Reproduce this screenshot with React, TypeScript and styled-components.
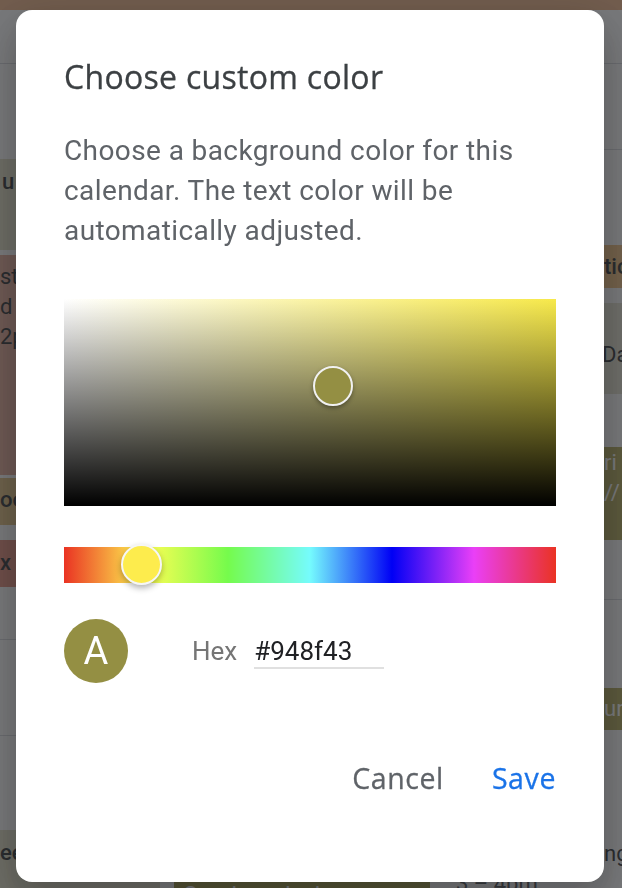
import React from "react";
import styled, { createGlobalStyle } from "styled-components";

const Global = createGlobalStyle`
  html, body { margin: 0; padding: 0; }
  body {
    width: 622px;
    height: 888px;
    overflow: hidden;
    background: #ffffff;
    font-family: Roboto, "Liberation Sans", Arial, sans-serif;
  }
`;

/* ---------- background calendar page ---------- */

const Page = styled.div`
  position: relative;
  width: 622px;
  height: 888px;
  overflow: hidden;
  background: #ffffff;
  display: flex;
  flex-direction: column;
`;

const TopBar = styled.div`
  flex: none;
  height: 10px;
  background: #efb98f;
`;

const Columns = styled.div`
  flex: 1;
  display: grid;
  grid-template-columns: 160px 280px 182px;
  min-height: 0;
`;

const Column = styled.div<{ $padLeft?: number; $padRight?: number }>`
  display: flex;
  flex-direction: column;
  overflow: hidden;
  padding-left: ${(p) => p.$padLeft ?? 0}px;
  padding-right: ${(p) => p.$padRight ?? 0}px;
`;

const Cell = styled.div<{ $h: number; $line?: boolean }>`
  flex: none;
  box-sizing: border-box;
  height: ${(p) => p.$h}px;
  border-bottom: ${(p) => (p.$line ? "1px solid #dadce0" : "none")};
`;

const Event = styled.div<{
  $h: number;
  $bg: string;
  $light?: boolean;
  $bold?: boolean;
  $top: number;
}>`
  flex: none;
  box-sizing: border-box;
  height: ${(p) => p.$h}px;
  background: ${(p) => p.$bg};
  color: ${(p) => (p.$light ? "#ffffff" : "#3c4043")};
  font-family: Roboto, "Liberation Sans", sans-serif;
  font-size: 22px;
  font-weight: ${(p) => (p.$bold ? 500 : 400)};
  line-height: 30px;
  white-space: nowrap;
  overflow: hidden;
  padding-top: ${(p) => p.$top}px;
`;

const EventLine = styled.div<{ $indent: number; $muted?: boolean }>`
  padding-left: ${(p) => p.$indent}px;
  font-weight: ${(p) => (p.$muted ? 400 : "inherit")};
  color: ${(p) => (p.$muted ? "#5f6368" : "inherit")};
`;

const Scrim = styled.div`
  position: fixed;
  inset: 0;
  background: rgba(32, 33, 36, 0.6);
`;

/* ---------- dialog ---------- */

const Dialog = styled.div`
  position: fixed;
  left: 16px;
  top: 10px;
  width: 588px;
  height: 872px;
  box-sizing: border-box;
  padding: 47px 48px 0 48px;
  background: #ffffff;
  border-radius: 16px;
  box-shadow: 0 24px 38px 3px rgba(0, 0, 0, 0.14), 0 9px 46px 8px rgba(0, 0, 0, 0.12);
  display: flex;
  flex-direction: column;
`;

const Title = styled.h2`
  margin: 0;
  font-family: "Open Sans", Roboto, sans-serif;
  font-weight: 400;
  font-size: 32px;
  letter-spacing: 0.3px;
  line-height: 40px;
  color: #3c4043;
  -webkit-text-stroke: 0.3px #3c4043;
`;

const Description = styled.p`
  margin: 34px 0 0 0;
  font-family: Roboto, "Liberation Sans", sans-serif;
  font-size: 28px;
  letter-spacing: 0.4px;
  line-height: 40px;
  color: #5f6368;
`;

const SatArea = styled.div<{ $hue: string }>`
  position: relative;
  margin-top: 48px;
  height: 207px;
  flex: none;
  background: linear-gradient(to top, #000000, rgba(0, 0, 0, 0)),
    linear-gradient(to right, #ffffff, ${(p) => p.$hue});
`;

const SatThumb = styled.div<{ $color: string }>`
  position: absolute;
  width: 36px;
  height: 36px;
  margin: -20px 0 0 -20px;
  border-radius: 50%;
  border: 2px solid #f1f1f1;
  background: ${(p) => p.$color};
  box-shadow: 0 2px 4px rgba(0, 0, 0, 0.35);
`;

const HueBar = styled.div`
  position: relative;
  margin-top: 41px;
  height: 36px;
  flex: none;
  background: linear-gradient(
    to right,
    #ea3323 0%,
    #fffe54 16.667%,
    #75fb4c 33.333%,
    #75fbfd 50%,
    #0000f5 66.667%,
    #ea3ff7 83.333%,
    #ea3323 100%
  );
`;

const HueThumb = styled.div<{ $color: string }>`
  position: absolute;
  top: 50%;
  width: 37px;
  height: 37px;
  margin: -21px 0 0 -20px;
  border-radius: 50%;
  border: 2px solid #f6f6f6;
  background: ${(p) => p.$color};
  box-shadow: 0 3px 6px rgba(0, 0, 0, 0.3);
`;

const ValueRow = styled.div`
  margin-top: 36px;
  display: flex;
  align-items: center;
  height: 64px;
`;

const Avatar = styled.div<{ $color: string }>`
  flex: none;
  width: 64px;
  height: 64px;
  border-radius: 50%;
  background: ${(p) => p.$color};
  color: #ffffff;
  display: flex;
  align-items: center;
  justify-content: center;
  font-family: Roboto, "Liberation Sans", sans-serif;
  font-size: 38px;
  line-height: 1;
`;

const HexLabel = styled.label`
  margin-left: 64px;
  font-family: Roboto, "Liberation Sans", sans-serif;
  font-size: 26px;
  line-height: 32px;
  color: #757575;
`;

const HexInput = styled.input`
  margin-left: 17px;
  width: 130px;
  box-sizing: border-box;
  padding: 0;
  border: none;
  border-bottom: 2px solid #e0e0e0;
  outline: none;
  background: transparent;
  font-family: Roboto, "Liberation Sans", sans-serif;
  font-size: 26px;
  line-height: 32px;
  height: 34px;
  margin-top: 2px;
  color: #202124;
`;

const Actions = styled.div`
  margin-top: 71px;
  margin-right: -8px;
  display: flex;
  justify-content: flex-end;
  gap: 32px;
`;

const TextButton = styled.button<{ $primary?: boolean }>`
  height: 48px;
  padding: 0 8px;
  border: none;
  background: transparent;
  font-family: "Open Sans", Roboto, sans-serif;
  font-weight: 500;
  font-size: 28.5px;
  letter-spacing: 0.6px;
  color: ${(p) => (p.$primary ? "#1a73e8" : "#5f6368")};
  -webkit-text-stroke: 0.3px ${(p) => (p.$primary ? "#1a73e8" : "#5f6368")};
  cursor: pointer;
`;

/* ---------- helpers ---------- */

function hexToHsv(hex: string) {
  const n = parseInt(hex.slice(1), 16);
  const r = ((n >> 16) & 255) / 255;
  const g = ((n >> 8) & 255) / 255;
  const b = (n & 255) / 255;
  const max = Math.max(r, g, b);
  const min = Math.min(r, g, b);
  const d = max - min;
  let h = 0;
  if (d !== 0) {
    if (max === r) h = ((g - b) / d) % 6;
    else if (max === g) h = (b - r) / d + 2;
    else h = (r - g) / d + 4;
    h *= 60;
    if (h < 0) h += 360;
  }
  return { h, s: max === 0 ? 0 : d / max, v: max };
}

type Line = { t: string; indent: number; muted?: boolean };
type Item = {
  kind: "cell" | "event";
  h: number;
  line?: boolean;
  bg?: string;
  bold?: boolean;
  light?: boolean;
  top?: number;
  lines?: Line[];
};

const leftColumn: Item[] = [
  { kind: "cell", h: 54, line: true },
  { kind: "cell", h: 95 },
  { kind: "event", h: 91, bg: "#e3e1c9", bold: true, top: 8, lines: [{ t: "u", indent: 2 }] },
  { kind: "cell", h: 5 },
  {
    kind: "event",
    h: 220,
    bg: "#e6b09f",
    top: 7,
    lines: [
      { t: "st", indent: 0 },
      { t: "d", indent: 0 },
      { t: "2p", indent: 0 },
    ],
  },
  { kind: "cell", h: 3 },
  { kind: "event", h: 47, bg: "#e3c388", bold: true, top: 7, lines: [{ t: "oo", indent: 0 }] },
  { kind: "cell", h: 15 },
  { kind: "event", h: 47, bg: "#e69483", bold: true, top: 8, lines: [{ t: "x C", indent: 0 }] },
  { kind: "cell", h: 53, line: true },
  { kind: "cell", h: 96, line: true },
  { kind: "cell", h: 94 },
  { kind: "event", h: 58, bg: "#e3e1c9", bold: true, top: 8, lines: [{ t: "ee", indent: 0 }] },
];

const middleColumn: Item[] = [
  { kind: "cell", h: 54, line: true },
  { kind: "cell", h: 816 },
  {
    kind: "event",
    h: 60,
    bg: "#a9a351",
    light: true,
    top: 0,
    lines: [{ t: "Session - Janice", indent: 10 }],
  },
];

const rightColumn: Item[] = [
  { kind: "cell", h: 54, line: true },
  { kind: "cell", h: 86, line: true },
  { kind: "cell", h: 95 },
  { kind: "event", h: 43, bg: "#f2c488", bold: true, top: 7, lines: [{ t: "tic", indent: 164 }] },
  { kind: "cell", h: 15 },
  { kind: "event", h: 91, bg: "#e6e4d3", top: 37, lines: [{ t: "Da", indent: 162 }] },
  { kind: "cell", h: 53 },
  {
    kind: "event",
    h: 93,
    bg: "#b8b065",
    light: true,
    top: 1,
    lines: [
      { t: "ri", indent: 164 },
      { t: "//", indent: 164 },
    ],
  },
  { kind: "cell", h: 60, line: true },
  { kind: "cell", h: 88 },
  { kind: "event", h: 42, bg: "#b8b065", light: true, top: 6, lines: [{ t: "ur", indent: 164 }] },
  { kind: "cell", h: 100 },
  {
    kind: "event",
    h: 70,
    bg: "#ffffff",
    top: 9,
    lines: [
      { t: "ng", indent: 164 },
      { t: "3 – 4pm", indent: 16, muted: true },
    ],
  },
];

function renderColumn(items: Item[]) {
  return items.map((it, i) =>
    it.kind === "cell" ? (
      <Cell key={i} $h={it.h} $line={it.line} />
    ) : (
      <Event
        key={i}
        $h={it.h}
        $bg={it.bg || "#fff"}
        $bold={it.bold}
        $light={it.light}
        $top={it.top ?? 0}
      >
        {it.lines?.map((l, j) => (
          <EventLine key={j} $indent={l.indent} $muted={l.muted}>
            {l.t}
          </EventLine>
        ))}
      </Event>
    )
  );
}

export default function App() {
  const hex = "#948f43";
  const { h, s, v } = hexToHsv(hex);
  const hueColor = "#f7e94b";
  const hueThumbColor = "#fdec4d";

  return (
    <>
      <Global />
      <Page>
        <TopBar />
        <Columns>
          <Column>{renderColumn(leftColumn)}</Column>
          <Column $padLeft={14} $padRight={10}>
            {renderColumn(middleColumn)}
          </Column>
          <Column>{renderColumn(rightColumn)}</Column>
        </Columns>
        <Scrim />
        <Dialog role="dialog" aria-label="Choose custom color">
          <Title>Choose custom color</Title>
          <Description>
            Choose a background color for this calendar. The text color will be automatically
            adjusted.
          </Description>
          <SatArea $hue={hueColor}>
            <SatThumb $color={hex} style={{ left: `${s * 100}%`, top: `${(1 - v) * 100}%` }} />
          </SatArea>
          <HueBar>
            <HueThumb $color={hueThumbColor} style={{ left: `${(h / 360) * 100}%` }} />
          </HueBar>
          <ValueRow>
            <Avatar $color={hex}>A</Avatar>
            <HexLabel htmlFor="hex">Hex</HexLabel>
            <HexInput id="hex" defaultValue={hex} />
          </ValueRow>
          <Actions>
            <TextButton>Cancel</TextButton>
            <TextButton $primary>Save</TextButton>
          </Actions>
        </Dialog>
      </Page>
    </>
  );
}
